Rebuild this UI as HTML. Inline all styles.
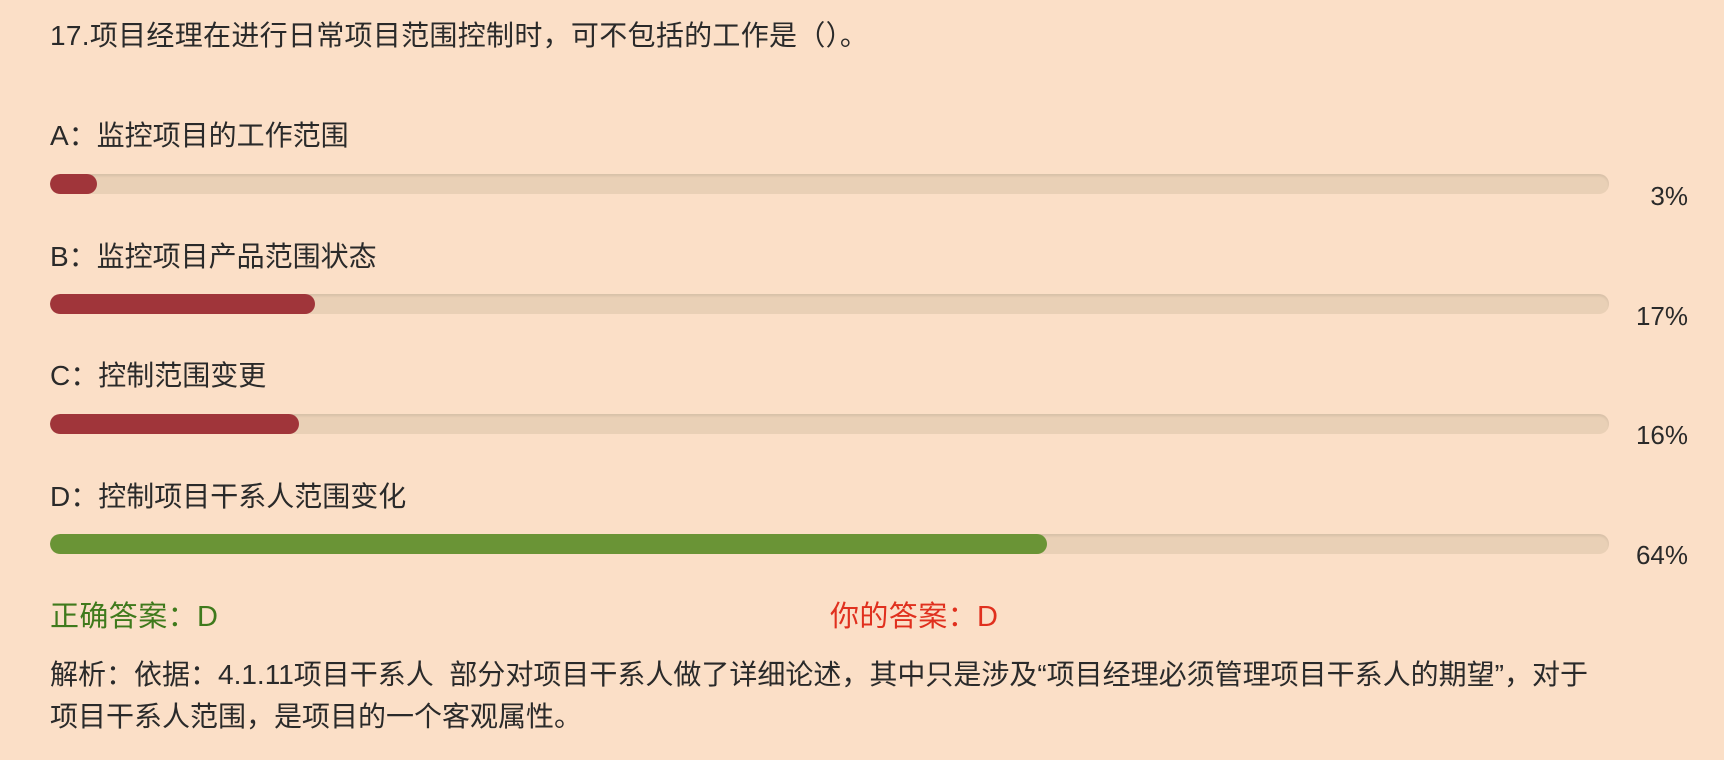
<!DOCTYPE html>
<html><head><meta charset="utf-8"><style>
body{margin:0;width:1724px;height:760px;background:#fbdfc7;font-family:"Liberation Sans","Noto Sans CJK SC",sans-serif;color:#2a2a2a;overflow:hidden;position:relative}
.t{position:absolute;left:50px;font-size:28px;line-height:32px;white-space:nowrap}
.track{position:absolute;left:50px;width:1559px;height:20px;border-radius:10px;background:#e9d0b6;box-shadow:inset 0 2px 2px rgba(0,0,0,0.08);overflow:hidden}
.fill{height:100%;border-radius:10px;background:#a0353a}
.p{position:absolute;right:36px;font-size:26px;line-height:30px}
</style></head><body>
<div class="t" style="top:20px;letter-spacing:0.3px">17.项目经理在进行日常项目范围控制时，可不包括的工作是（）。</div>
<div class="t" style="top:120px">A：监控项目的工作范围</div>
<div class="track" style="top:174px"><div class="fill" style="width:47px"></div></div>
<div class="p" style="top:181px">3%</div>
<div class="t" style="top:241px">B：监控项目产品范围状态</div>
<div class="track" style="top:294px"><div class="fill" style="width:265px"></div></div>
<div class="p" style="top:301px">17%</div>
<div class="t" style="top:360px">C：控制范围变更</div>
<div class="track" style="top:414px"><div class="fill" style="width:249px"></div></div>
<div class="p" style="top:420px">16%</div>
<div class="t" style="top:481px">D：控制项目干系人范围变化</div>
<div class="track" style="top:534px"><div class="fill" style="width:997px;background:#6a9436"></div></div>
<div class="p" style="top:540px">64%</div>
<div class="t" style="top:601px;color:#3f7a1c;font-size:29px;letter-spacing:0.4px">正确答案：D</div>
<div class="t" style="top:601px;left:830px;color:#e0301e;font-size:29px;letter-spacing:0.4px">你的答案：D</div>
<div class="t" style="top:654px;font-size:28px;line-height:42px">解析：依据：4.1.11项目干系人&nbsp; 部分对项目干系人做了详细论述，其中只是涉及“项目经理必须管理项目干系人的期望”，对于<br>项目干系人范围，是项目的一个客观属性。</div>
</body></html>
